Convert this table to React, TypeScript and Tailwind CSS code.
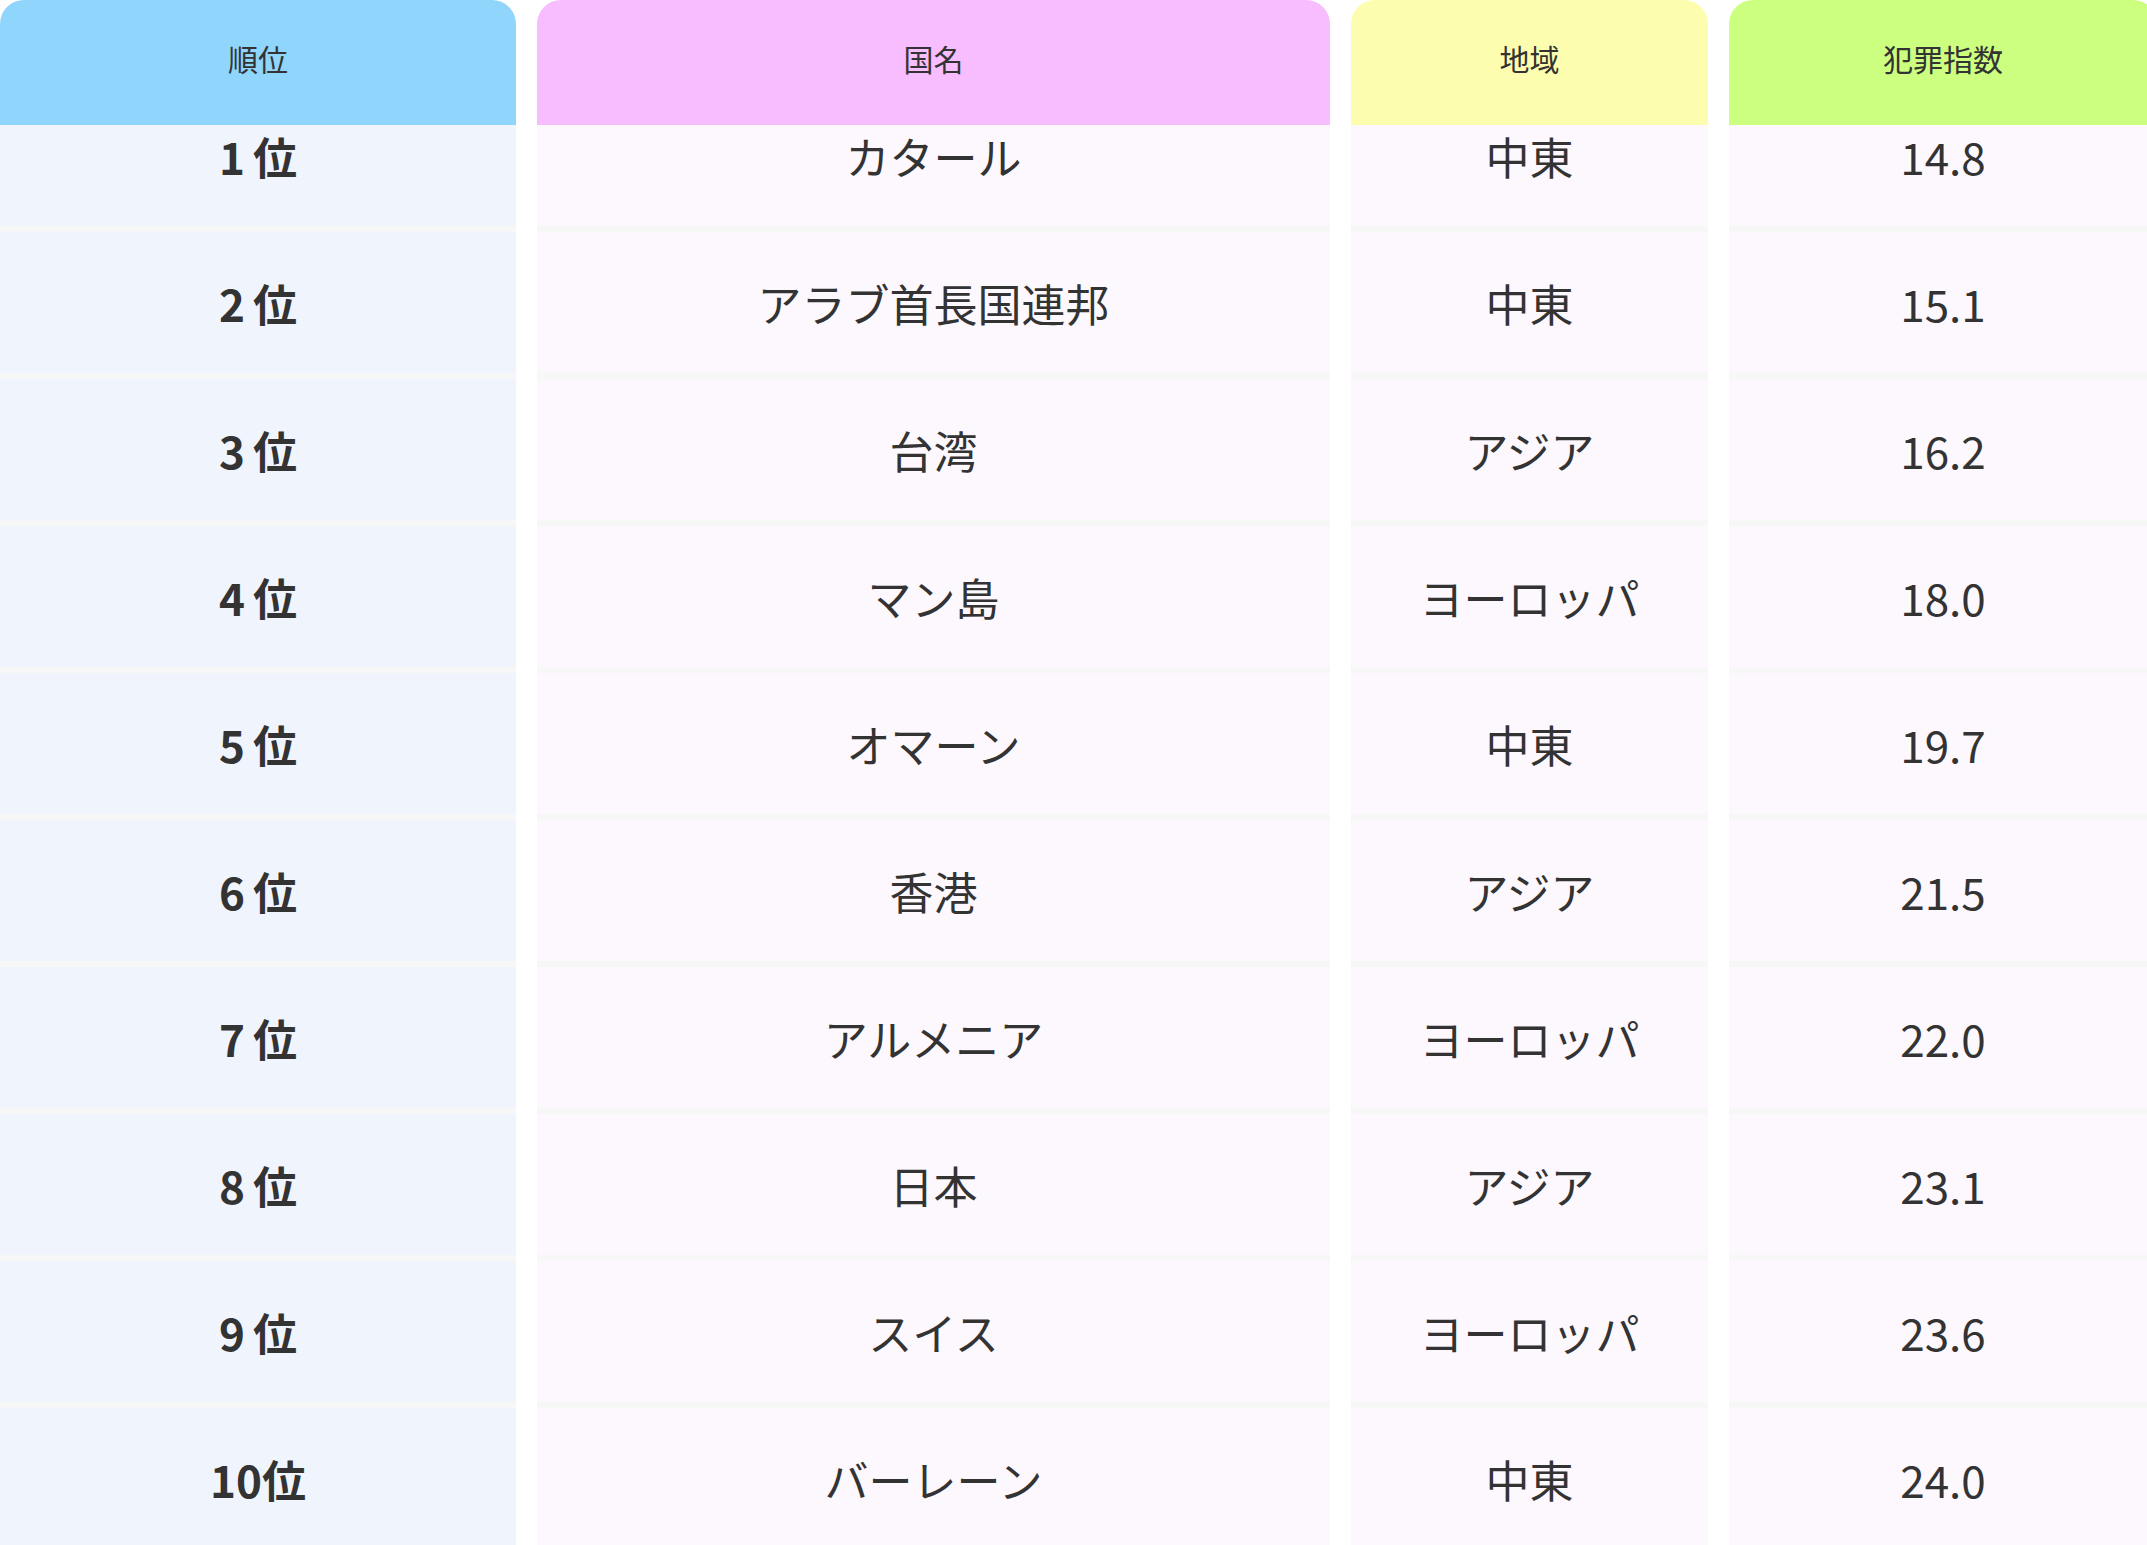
import * as React from "react";

const COLUMNS = "grid grid-cols-[516px_793px_357px_428px] gap-x-[21px]";

const rows = [
  { rank: 1, name: "カタール", region: "中東", index: "14.8" },
  { rank: 2, name: "アラブ首長国連邦", region: "中東", index: "15.1" },
  { rank: 3, name: "台湾", region: "アジア", index: "16.2" },
  { rank: 4, name: "マン島", region: "ヨーロッパ", index: "18.0" },
  { rank: 5, name: "オマーン", region: "中東", index: "19.7" },
  { rank: 6, name: "香港", region: "アジア", index: "21.5" },
  { rank: 7, name: "アルメニア", region: "ヨーロッパ", index: "22.0" },
  { rank: 8, name: "日本", region: "アジア", index: "23.1" },
  { rank: 9, name: "スイス", region: "ヨーロッパ", index: "23.6" },
  { rank: 10, name: "バーレーン", region: "中東", index: "24.0" },
];

const headers = [
  { label: "順位", bg: "bg-[#90d5fc]" },
  { label: "国名", bg: "bg-[#f7bdff]" },
  { label: "地域", bg: "bg-[#fdfdb0]" },
  { label: "犯罪指数", bg: "bg-[#ccff80]" },
];

const cell =
  "h-[147px] border-b-[6px] border-[#f7f7f7] flex items-center justify-center text-[44px] leading-none";

export default function App() {
  return (
    <div
      className="w-screen min-h-screen overflow-hidden bg-white text-[#333333]"
      style={{ fontFamily: '"Noto Sans CJK JP", "Noto Sans", sans-serif' }}
    >
      <div className="w-max">
        {/* Header */}
        <div className={`${COLUMNS} relative z-10`}>
          {headers.map((h) => (
            <div
              key={h.label}
              className={`${h.bg} h-[125px] rounded-t-[24px] flex items-center justify-center text-[30px] leading-none pb-[10px]`}
            >
              {h.label}
            </div>
          ))}
        </div>

        <div className={`${COLUMNS} -mt-[40px]`}>
          {rows.map((r) => (
            <React.Fragment key={r.rank}>
              <div className={`${cell} bg-[#f0f5fd] font-bold`}>
                <span>{r.rank}</span>
                <span className={r.rank < 10 ? "ml-[8px]" : ""}>位</span>
              </div>
              <div className={`${cell} bg-[#fdf8fe]`}>{r.name}</div>
              <div className={`${cell} bg-[#fdf8fe]`}>{r.region}</div>
              <div className={`${cell} bg-[#fdf8fe]`}>{r.index}</div>
            </React.Fragment>
          ))}
        </div>
      </div>
    </div>
  );
}
